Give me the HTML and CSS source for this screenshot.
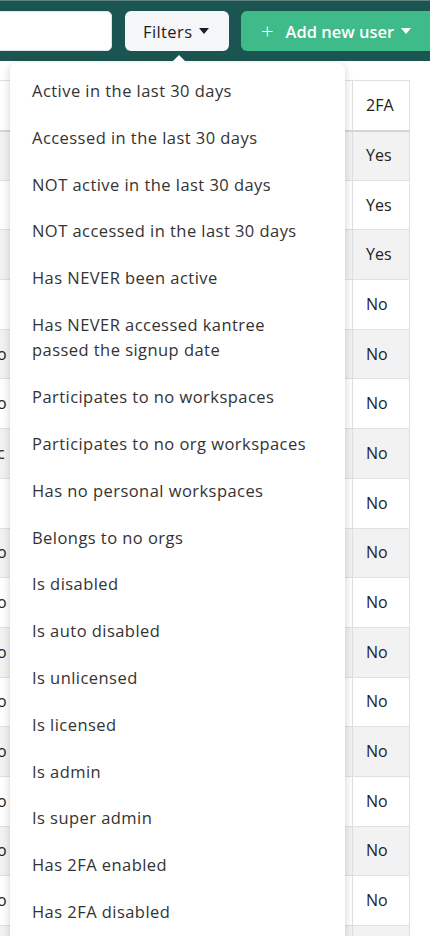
FILE: index.html
```html
<!DOCTYPE html>
<html>
<head>
<meta charset="utf-8">
<link rel="stylesheet" href="styles.css">
</head>
<body>
<div class="page">
  <header class="topbar">
    <div class="search"></div>
    <button class="btn btn-filters">Filters <span class="caret dark"></span></button>
    <button class="btn btn-add"><span class="plus">+</span> Add new user <span class="caret light"></span></button>
  </header>

  <div class="table-wrap">
    <table class="users">
      <thead>
        <tr><th class="c-main"></th><th class="c-2fa">2FA</th></tr>
      </thead>
      <tbody>
        <tr><td class="c-main"></td><td>Yes</td></tr>
        <tr><td class="c-main"></td><td>Yes</td></tr>
        <tr><td class="c-main"></td><td>Yes</td></tr>
        <tr><td class="c-main"></td><td>No</td></tr>
        <tr><td class="c-main">No</td><td>No</td></tr>
        <tr><td class="c-main">No</td><td>No</td></tr>
        <tr><td class="c-main">Nc</td><td>No</td></tr>
        <tr><td class="c-main"></td><td>No</td></tr>
        <tr><td class="c-main">No</td><td>No</td></tr>
        <tr><td class="c-main">No</td><td>No</td></tr>
        <tr><td class="c-main">No</td><td>No</td></tr>
        <tr><td class="c-main">No</td><td>No</td></tr>
        <tr><td class="c-main">No</td><td>No</td></tr>
        <tr><td class="c-main">No</td><td>No</td></tr>
        <tr><td class="c-main">No</td><td>No</td></tr>
        <tr><td class="c-main">No</td><td>No</td></tr>
        <tr><td class="c-main">No</td><td>No</td></tr>
      </tbody>
    </table>
  </div>

  <div class="menu">
    <span class="menu-arrow"></span>
    <ul class="menu-list">
      <li>Active in the last 30 days</li>
      <li>Accessed in the last 30 days</li>
      <li>NOT active in the last 30 days</li>
      <li>NOT accessed in the last 30 days</li>
      <li>Has NEVER been active</li>
      <li>Has NEVER accessed kantree<br>passed the signup date</li>
      <li>Participates to no workspaces</li>
      <li>Participates to no org workspaces</li>
      <li>Has no personal workspaces</li>
      <li>Belongs to no orgs</li>
      <li>Is disabled</li>
      <li>Is auto disabled</li>
      <li>Is unlicensed</li>
      <li>Is licensed</li>
      <li>Is admin</li>
      <li>Is super admin</li>
      <li>Has 2FA enabled</li>
      <li>Has 2FA disabled</li>
    </ul>
  </div>
</div>
</body>
</html>
```

FILE: styles.css
```css
* { box-sizing: border-box; }
html, body {
  margin: 0;
  padding: 0;
  background: #ffffff;
  overflow: hidden;
}
body {
  font-family: "Open Sans", Lato, sans-serif;
  color: #222;
  font-size: 16px;
}
.page {
  position: relative;
  width: 430px;
  height: 936px;
  overflow: hidden;
}
.topbar {
  height: 61px;
  background: #1b5551;
  display: flex;
  align-items: center;
  gap: 13px;
  padding: 0;
  border-top: 1px solid #5f8683;
}
.search {
  flex: none;
  width: 140px;
  height: 40px;
  margin-left: -28px;
  background: #fff;
  border: 1px solid #dfe3e6;
  border-radius: 5px;
}
.btn {
  flex: none;
  height: 40px;
  border: none;
  border-radius: 6px;
  font-family: inherit;
  font-size: 16px;
  display: flex;
  align-items: center;
  padding: 0;
  cursor: pointer;
}
.btn-filters {
  width: 104px;
  background: #f4f6f8;
  color: #1c1d2b;
  padding-left: 18px;
  gap: 7px;
  font-weight: 400;
  font-size: 16.5px;
  letter-spacing: 0.4px;
}
.btn-add {
  width: 200px;
  margin-left: -1px;
  background: #3fba89;
  color: #fff;
  padding-left: 20px;
  gap: 0;
  font-weight: 600;
  font-size: 16.5px;
  letter-spacing: 0;
}
.plus {
  font-weight: 300;
  font-size: 22px;
  line-height: 1;
  margin-right: 12px;
  margin-top: -2px;
}
.caret {
  display: inline-block;
  width: 0;
  height: 0;
  border-left: 5px solid transparent;
  border-right: 5px solid transparent;
  border-top: 6px solid #1c1d2b;
}
.caret.light {
  border-top-color: #fff;
  margin-left: 7px;
}

.table-wrap {
  margin-top: 19px;
  margin-left: -29px;
}
.users {
  border-collapse: collapse;
  width: 439px;
}
.users th, .users td {
  border: 1px solid #e0e0e0;
  padding: 0 13px 1px;
  text-align: left;
  font-weight: 400;
  font-size: 16px;
  color: #222;
  height: 49.7px;
}
.users th { height: 50px; }
.users thead th { border-bottom: 2px solid #d6d6d6; }
.users .c-main { width: 381px; }
.users tbody tr:nth-child(odd) td { background: #f2f2f2; }
.users tbody tr:nth-child(even) td { background: #ffffff; }

.menu {
  position: absolute;
  left: 10px;
  top: 63px;
  width: 335px;
  height: 900px;
  background: #fff;
  border-radius: 7px;
  box-shadow: 0 2px 10px rgba(0, 0, 0, 0.18);
}
.menu-arrow {
  position: absolute;
  top: -8px;
  left: 161px;
  width: 0;
  height: 0;
  border-left: 8px solid transparent;
  border-right: 8px solid transparent;
  border-bottom: 8px solid #fff;
}
.menu-list {
  list-style: none;
  margin: 0;
  padding: 4.4px 0 0;
}
.menu-list li {
  padding: 10.6px 22px;
  line-height: 25.6px;
  font-size: 16.5px;
  letter-spacing: 0.45px;
  color: #333;
}
```
